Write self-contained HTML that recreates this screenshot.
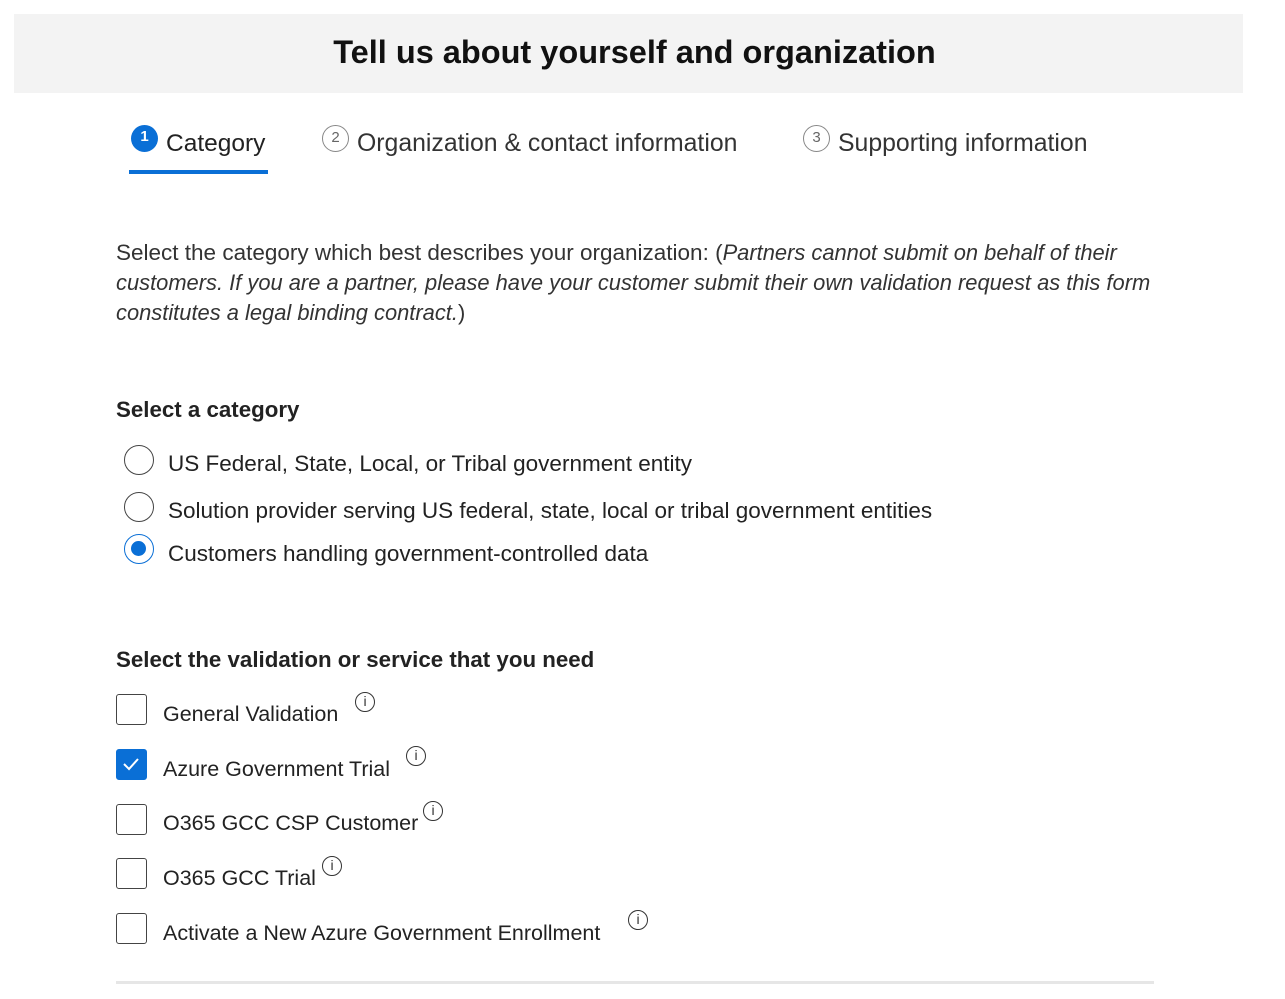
<!DOCTYPE html>
<html><head><meta charset="utf-8"><style>
body{margin:0;width:1285px;height:999px;background:#fff;font-family:"Liberation Sans",sans-serif;color:#222;position:relative;overflow:hidden}
.a{position:absolute;white-space:nowrap;line-height:30px}
.t{font-size:22.5px}
.c{font-size:21.5px}
.rad{position:absolute;width:30px;height:30px;border:1.5px solid #444;border-radius:50%;box-sizing:border-box}
.cb{position:absolute;width:31px;height:31px;border:1.5px solid #444;border-radius:3px;box-sizing:border-box}
.info{position:absolute;width:20px;height:20px;border:1.5px solid #333;border-radius:50%;box-sizing:border-box;font:14px/17px "Liberation Sans",sans-serif;text-align:center;color:#333}
.num{position:absolute;width:27px;height:27px;border-radius:50%;box-sizing:border-box;font-size:15px;line-height:24px;text-align:center}
</style></head><body>
<div style="position:absolute;left:14px;top:14px;width:1229px;height:79px;background:#f3f3f3"></div>
<div class="a" style="left:20px;width:1229px;top:35px;line-height:34px;text-align:center;font-size:32.5px;font-weight:bold;color:#111">Tell us about yourself and organization</div>

<div class="num" style="left:131px;top:125px;background:#0a6fd6;color:#fff;font-weight:bold">1</div>
<div class="a" style="left:166px;top:129px;font-size:24.5px;color:#222">Category</div>
<div style="position:absolute;left:129px;top:170px;width:139px;height:4px;background:#0a6fd6"></div>
<div class="num" style="left:322px;top:125px;border:1.5px solid #888;color:#666">2</div>
<div class="a" style="left:357px;top:129px;font-size:24.8px;color:#333">Organization &amp; contact information</div>
<div class="num" style="left:803px;top:125px;border:1.5px solid #888;color:#666">3</div>
<div class="a" style="left:838px;top:129px;font-size:24.8px;color:#333">Supporting information</div>

<div class="a" style="left:116px;top:238px;color:#333;font-size:22.5px">Select the category which best describes your organization: (<i style="font-size:21.9px">Partners cannot submit on behalf of their</i></div>
<div class="a" style="left:116px;top:268px;color:#333;font-size:21.9px"><i>customers. If you are a partner, please have your customer submit their own validation request as this form</i></div>
<div class="a" style="left:116px;top:298px;color:#333;font-size:21.9px"><i>constitutes a legal binding contract.</i>)</div>

<div class="a" style="left:116px;top:395px;font-weight:bold;color:#222;font-size:22.3px">Select a category</div>
<div class="rad" style="left:124px;top:445px"></div>
<div class="a t" style="left:168px;top:449px">US Federal, State, Local, or Tribal government entity</div>
<div class="rad" style="left:124px;top:492px"></div>
<div class="a t" style="left:168px;top:496px">Solution provider serving US federal, state, local or tribal government entities</div>
<div class="rad" style="left:124px;top:534px;border-color:#0a6fd6"><div style="position:absolute;left:6px;top:6px;width:15px;height:15px;border-radius:50%;background:#0a6fd6"></div></div>
<div class="a t" style="left:168px;top:539px">Customers handling government-controlled data</div>

<div class="a" style="left:116px;top:645px;font-weight:bold;color:#222;font-size:22.3px">Select the validation or service that you need</div>

<div class="cb" style="left:116px;top:694px"></div>
<div class="a c" style="left:163px;top:699px">General Validation</div>
<div class="info" style="left:355px;top:692px">i</div>

<div class="cb" style="left:116px;top:749px;background:#0a6fd6;border-color:#0a6fd6"><svg width="28" height="28" style="position:absolute;left:0;top:0"><path d="M7 14 L12 19 L21 9" stroke="#fff" stroke-width="2" fill="none"/></svg></div>
<div class="a c" style="left:163px;top:754px">Azure Government Trial</div>
<div class="info" style="left:406px;top:746px">i</div>

<div class="cb" style="left:116px;top:804px"></div>
<div class="a c" style="left:163px;top:808px">O365 GCC CSP Customer</div>
<div class="info" style="left:423px;top:801px">i</div>

<div class="cb" style="left:116px;top:858px"></div>
<div class="a c" style="left:163px;top:863px">O365 GCC Trial</div>
<div class="info" style="left:322px;top:856px">i</div>

<div class="cb" style="left:116px;top:913px"></div>
<div class="a c" style="left:163px;top:918px">Activate a New Azure Government Enrollment</div>
<div class="info" style="left:628px;top:910px">i</div>

<div style="position:absolute;left:116px;top:981px;width:1038px;height:3px;background:#e6e6e6"></div>
</body></html>
